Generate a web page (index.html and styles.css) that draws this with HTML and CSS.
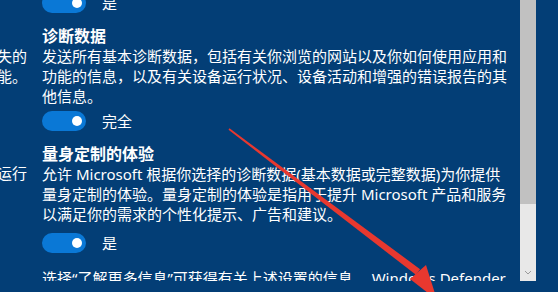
FILE: index.html
```html
<!DOCTYPE html>
<html lang="zh-CN">
<head>
  <meta charset="UTF-8" />
  <meta name="viewport" content="width=device-width, initial-scale=1.0"/>
  <title>隐私设置</title>
  <link rel="stylesheet" href="styles.css">
</head>
<body>
  <div class="screen">
    <div class="side">
      <div class="side-line"><span>使用设备的位置数据帮助你找到丢失的</span></div>
      <div class="side-line"><span>设备，你需要打开此功能。</span></div>
      <div class="side-line side-gap"><span>并让设备中的应用在后台运行</span></div>
    </div>

    <div class="main">
      <div class="toggle-row first">
        <span class="toggle"></span>
        <span class="toggle-label">是</span>
      </div>

      <h3>诊断数据</h3>
      <p>发送所有基本诊断数据，包括有关你浏览的网站以及你如何使用应用和功能的信息，以及有关设备运行状况、设备活动和增强的错误报告的其他信息。</p>
      <div class="toggle-row row-full">
        <span class="toggle"></span>
        <span class="toggle-label">完全</span>
      </div>

      <h3>量身定制的体验</h3>
      <p>允许 Microsoft 根据你选择的诊断数据(基本数据或完整数据)为你提供量身定制的体验。量身定制的体验是指用于提升 Microsoft 产品和服务以满足你的需求的个性化提示、广告和建议。</p>
      <div class="toggle-row row-custom">
        <span class="toggle"></span>
        <span class="toggle-label">是</span>
      </div>

      <p class="note">选择“了解更多信息”可获得有关上述设置的信息。 Windows Defender SmartScreen 的工作方式以及相关数据</p>
    </div>

    <div class="scrollbar">
      <div class="thumb"></div>
      <div class="track">
        <svg class="chevron" width="16" height="16" viewBox="0 0 16 16">
          <polyline points="5,6 8,9 11,6" fill="none" stroke="#9a9a9a" stroke-width="1"/>
        </svg>
      </div>
    </div>
  </div>

  <!-- red annotation arrow drawn over the screenshot -->
  <svg class="arrow" width="558" height="292" viewBox="0 0 558 292">
    <polygon points="228.5,129.7 229.5,128.3 420.1,269.2 415.9,274.8" fill="#e8382f"/>
    <polygon points="410,279 426,265 437,300" fill="#e8382f"/>
  </svg>
</body>
</html>
```

FILE: styles.css
```css
body {
  margin: 0;
  width: 558px;
  height: 292px;
  overflow: hidden;
  position: relative;
  background: #033e76;
  color: #fff;
  font-family: "Noto Sans", "Noto Sans CJK SC", sans-serif;
  font-size: 15px;
  line-height: 20px;
}
.screen {
  display: flex;
  height: 281px;
  overflow: hidden;
}
.side {
  flex: none;
  width: 27px;
  margin-right: 15px;
  padding-top: 46px;
  overflow: hidden;
}
.side-line {
  display: flex;
  justify-content: flex-end;
  white-space: nowrap;
}
.side-gap {
  margin-top: 77px;
}
.main {
  flex: none;
  width: 467px;
}
h3 {
  margin: 13px 0 0;
  font-size: 16px;
  line-height: 20px;
  font-weight: bold;
}
p {
  margin: 0;
}
.toggle-row {
  display: flex;
  align-items: center;
  gap: 16px;
  height: 20px;
}
.toggle-row.first {
  margin-top: -7px;
}
.row-full {
  margin-top: 5px;
}
.row-custom {
  margin-top: 9px;
}
.toggle {
  width: 44px;
  height: 20px;
  box-sizing: border-box;
  padding-right: 4px;
  border-radius: 10px;
  background: #0a78d6;
  display: flex;
  align-items: center;
  justify-content: flex-end;
}
.toggle::after {
  content: "";
  width: 10px;
  height: 10px;
  border-radius: 50%;
  background: #fff;
}
.note {
  margin-top: 15px;
}
.scrollbar {
  flex: none;
  width: 16px;
  margin-left: 11px;
  display: flex;
  flex-direction: column;
}
.thumb {
  height: 204px;
  background: #c1c1c1;
}
.track {
  flex: 1;
  background: #e8e8e8;
  display: flex;
  align-items: flex-end;
}
.arrow {
  position: absolute;
  left: 0;
  top: 0;
  pointer-events: none;
}
```
